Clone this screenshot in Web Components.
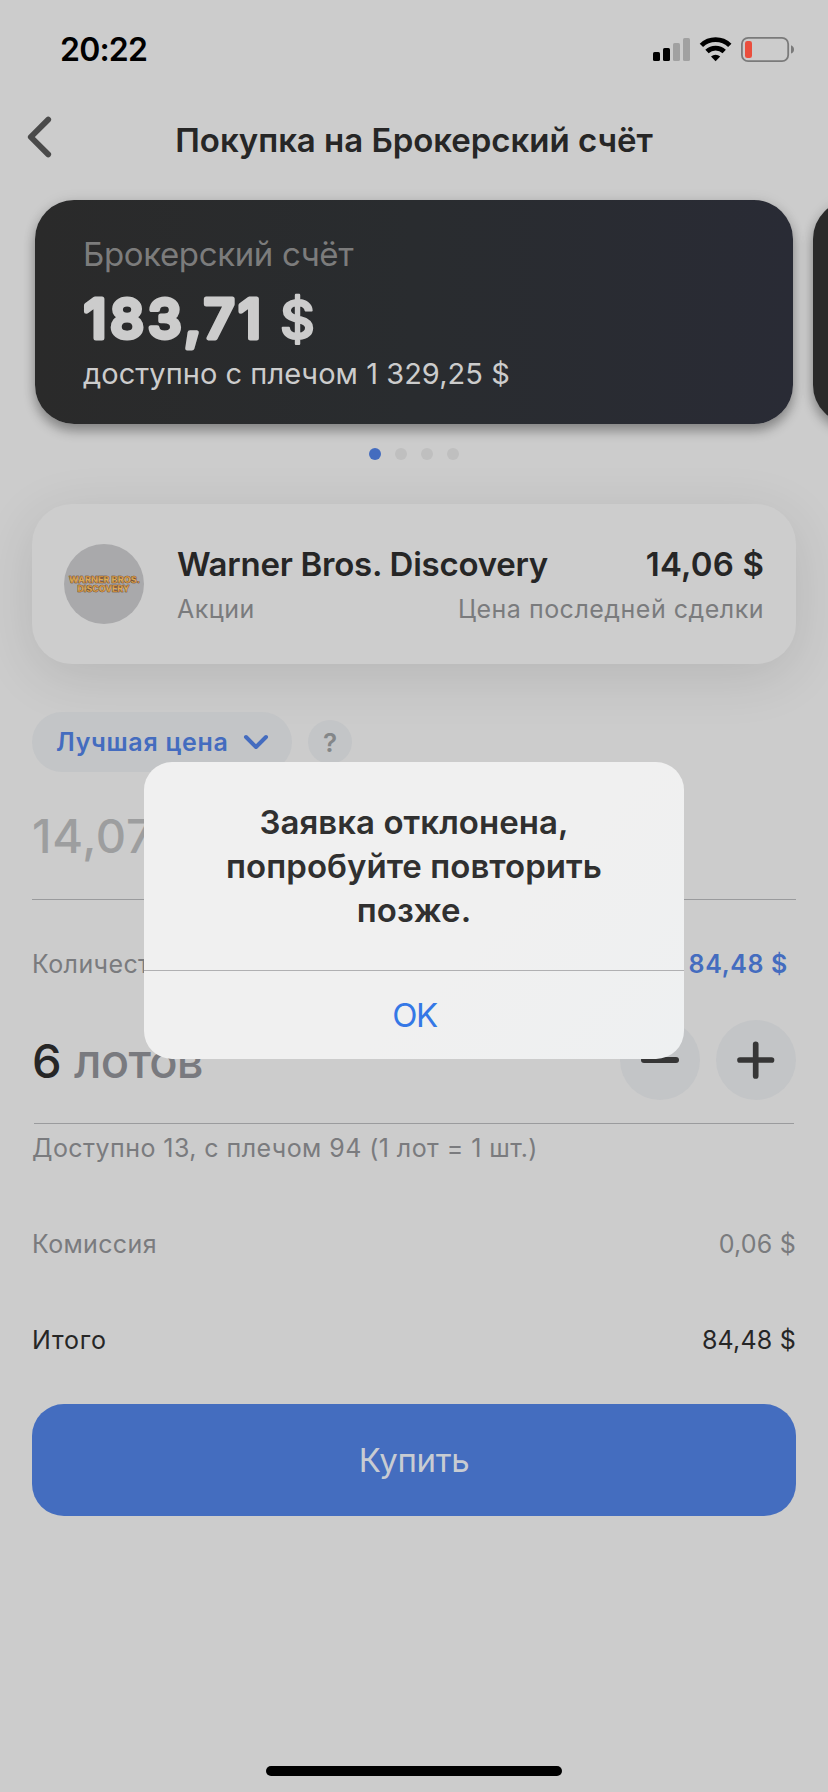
<!DOCTYPE html>
<html lang="ru">
<head>
<meta charset="utf-8">
<title>Покупка на Брокерский счёт</title>
<style>
html,body{margin:0;padding:0}
body{width:828px;height:1792px;overflow:hidden;background:#ccc;color:#262626;font-family:Inter,"Liberation Sans",sans-serif}
</style>
</head>
<body>
<order-screen></order-screen>
<script>
function define(name, html){
  const tpl = document.createElement('template');
  tpl.innerHTML = html;
  customElements.define(name, class extends HTMLElement{
    constructor(){
      super();
      this.attachShadow({mode:'open'}).appendChild(tpl.content.cloneNode(true));
    }
  });
}

define('status-bar', `
<style>
:host{display:flex;height:100px;box-sizing:border-box;padding:0 33px 0 60px;align-items:center;justify-content:space-between;color:#000}
.time{font-weight:600;font-size:32px;line-height:40px;letter-spacing:-.8px}
svg{display:block}
</style>
<div class="time">20:22</div>
<svg width="142" height="32" viewBox="653 34 142 32">
  <rect x="653" y="52" width="7" height="9" rx="1.6"/>
  <rect x="663" y="48" width="7" height="13" rx="1.6"/>
  <rect x="673" y="43" width="7" height="18" rx="1.6" fill="#a1a1a1"/>
  <rect x="683" y="38" width="7" height="23" rx="1.6" fill="#a1a1a1"/>
  <g fill="none" stroke="#000" stroke-width="4.8">
    <path d="M701.4 45.4A20.4 20.4 0 0 1 729.8 45.4"/>
    <path d="M707 51.5A12.4 12.4 0 0 1 724.2 51.5"/>
  </g>
  <path d="M711 56.6a6.6 6.6 0 0 1 9.2 0L715.6 61.2Z"/>
  <rect x="741.9" y="37.9" width="46.3" height="23.2" rx="6.2" fill="none" stroke="#7a7a7a" stroke-width="1.8"/>
  <rect x="745" y="41" width="7" height="17" rx="2.3" fill="#ea4e3d"/>
  <path d="M791 45.2q3 1.2 3 4.2t-3 4.2Z" fill="#7a7a7a"/>
</svg>`);

define('nav-header', `
<style>
:host{display:grid;grid-template-columns:80px 1fr 80px;height:80px;align-items:center}
svg{display:block;margin:-6px 0 0 24px}
h1{margin:0;text-align:center;font-weight:600;font-size:33px;line-height:40px;letter-spacing:-.04px;white-space:nowrap}
</style>
<svg width="32" height="48" viewBox="24 113 32 48"><path d="M48.2 119.6 30.8 137 48.2 154.4" fill="none" stroke="#4a4a4a" stroke-width="5.8" stroke-linecap="round" stroke-linejoin="round"/></svg>
<h1><slot></slot></h1>`);

define('account-card', `
<style>
:host{display:block;flex:none;box-sizing:border-box;width:758px;height:224px;border-radius:39px;padding:34px 48px;background:linear-gradient(90deg,#2a2a2a,#292c2f 50%,#292b35);box-shadow:0 7px 12px rgba(0,0,0,.32),0 0 14px rgba(0,0,0,.08);white-space:nowrap}
.name{font-size:33px;line-height:40px;letter-spacing:-.37px;color:#7c7c7c;height:40px}
svg{display:block;height:60px;margin-top:14px;overflow:visible}
.more{font-size:29px;line-height:36px;letter-spacing:.04px;color:#ccc;margin-top:7.6px}
</style>
<div class="name"><slot name="name"></slot></div>
<svg width="240" height="60" viewBox="0 0 240 60" font-family="Inter,sans-serif" font-weight="500" font-size="53.5" fill="#ccc" stroke="#ccc" stroke-linejoin="round"><text x="1" y="50" stroke-width="5" letter-spacing="4.1" id="sum"></text><text x="197" y="50.5" font-size="54" stroke-width="2.2" id="cur"></text></svg>
<div class="more"><slot name="more"></slot></div>`);

define('page-dots', `
<style>
:host{display:flex;justify-content:center;gap:14px;padding-top:24px}
i{width:12px;height:12px;border-radius:50%;background:#bfbfbf}
i:first-of-type{background:#446cbf}
</style><i></i><i></i><i></i><i></i>`);

define('stock-card', `
<style>
:host{display:flex;box-sizing:border-box;height:160px;margin:44px 32px 0;padding:40px 32px;border-radius:40px;background:#cdcdcd;box-shadow:0 12px 56px rgba(0,0,0,.11);white-space:nowrap}
.logo{flex:none;width:80px;height:80px;border-radius:50%;background:#a9a9ab}
.text{flex:1;margin-left:33px}
.row{display:flex;justify-content:space-between}
.top{font-weight:600;font-size:33px;line-height:40px}
.name{letter-spacing:-.25px}
.price{letter-spacing:.15px}
.sub{font-size:25px;line-height:32px;margin-top:9px;color:#7a7b7d;letter-spacing:.5px}
</style>
<svg class="logo" viewBox="0 0 80 80">
  <defs><linearGradient id="g" x1="0" x2="0" y1="0" y2="1"><stop offset="0" stop-color="#b8742e"/><stop offset=".5" stop-color="#dfb05a"/><stop offset="1" stop-color="#a9601f"/></linearGradient></defs>
  <g font-family="Inter,sans-serif" font-weight="800" font-size="9.6" fill="url(#g)" stroke="#5c3214" stroke-width=".7" paint-order="stroke">
    <text x="5" y="39.4" textLength="71" lengthAdjust="spacingAndGlyphs">WARNER BROS.</text>
    <text x="13.5" y="48.4" textLength="52" lengthAdjust="spacingAndGlyphs">DISCOVERY</text>
  </g>
</svg>
<div class="text">
  <div class="row top"><span class="name"><slot name="title"></slot></span><span class="price"><slot name="price"></slot></span></div>
  <div class="row sub"><span><slot name="kind"></slot></span><span><slot name="note"></slot></span></div>
</div>`);

define('price-type', `
<style>
:host{display:flex;align-items:center;gap:16px;margin:48px 32px 0;height:60px}
.pill{display:flex;align-items:center;box-sizing:border-box;width:260px;height:60px;border-radius:30px;padding-left:24px;background:#c3c5c7;color:#446cbf;font-weight:600;font-size:25px;line-height:30px;letter-spacing:.72px;white-space:nowrap}
.pill svg{margin-left:14px}
.help{width:44px;height:44px;border-radius:50%;background:#c3c5c7;color:#848789;font-weight:600;font-size:26px;line-height:45px;text-align:center}
</style>
<div class="pill"><slot></slot><svg width="26" height="18" viewBox="0 0 26 18"><path d="M3 4 13 14 23 4" fill="none" stroke="#446cbf" stroke-width="4" stroke-linecap="round" stroke-linejoin="round"/></svg></div>
<div class="help">?</div>`);

define('price-field', `
<style>
:host{display:block;box-sizing:border-box;height:128px;margin:0 32px;padding-top:34px;border-bottom:1px solid #9a9b9d;color:#9d9e9f;font-weight:500;font-size:47px;line-height:60px;letter-spacing:.7px}
</style><slot></slot>`);

define('quantity-field', `
<style>
:host{display:block;margin:0 32px}
.row{display:flex;justify-content:space-between;align-items:center}
.head{height:40px;padding:44px 8px 0 0;font-size:25px;line-height:40px;color:#7a7b7e;letter-spacing:.4px}
.head b{font-weight:600;color:#446cbf;letter-spacing:.63px}
.qty{height:80px;padding-top:36px;margin-bottom:23px}
.value{font-weight:500;font-size:47px;line-height:60px;white-space:nowrap;display:flex;padding-top:2px}
.value em{font-style:normal;color:#797a7f;font-size:47px;font-weight:500;letter-spacing:-.8px;margin-left:12.5px}
.btns{display:flex;gap:16px}
.btns svg{display:block;border-radius:50%;background:#c3c5c7}
.rule{height:1px;margin:0 2px;background:#9a9b9d}
.hint{font-size:25px;line-height:40px;padding-top:3.5px;color:#7a7b7e;letter-spacing:.44px;white-space:nowrap}
</style>
<div class="row head"><span>Количество</span><b><slot name="sum"></slot></b></div>
<div class="row qty">
  <div class="value"><slot name="value"></slot><em><slot name="unit"></slot></em></div>
  <div class="btns">
    <svg width="80" height="80" viewBox="0 0 80 80"><path d="M24 40H56" stroke="#363636" stroke-width="6" stroke-linecap="round"/></svg>
    <svg width="80" height="80" viewBox="0 0 80 80"><path d="M24 40H55.5M39.7 24.3V56" stroke="#363636" stroke-width="5.7" stroke-linecap="round"/></svg>
  </div>
</div>
<div class="rule"></div>
<div class="hint"><slot name="hint"></slot></div>`);

define('total-row', `
<style>
:host{display:flex;justify-content:space-between;margin:0 32px;height:40px;font-size:25px;line-height:40px;color:#7a7b7e}
:host([strong]){color:#262626}
.k{letter-spacing:.35px}
:host([strong]) .k{letter-spacing:.75px}
.v{letter-spacing:.2px}
</style><span class="k"><slot></slot></span><span class="v"><slot name="value"></slot></span>`);

define('buy-button', `
<style>
:host{display:flex;align-items:center;justify-content:center;height:112px;margin:44px 32px 0;border-radius:32px;background:#446dbf;color:#c8ccd2;font-size:33px;letter-spacing:-.34px}
</style><slot></slot>`);

define('alert-dialog', `
<style>
:host{display:block;position:absolute;left:144px;top:762px;width:540px;height:297px;border-radius:28px;overflow:hidden;background:linear-gradient(135deg,#f0f0f0 60%,#eef0f1)}
p{margin:0;height:209px;box-sizing:border-box;padding:38px 32px 0;border-bottom:1px solid #b0b0b2;text-align:center;font-weight:600;font-size:33px;line-height:44px;letter-spacing:.04px;color:#303030}
.ok{text-align:center;font-size:33px;line-height:88px;letter-spacing:-1.4px;text-indent:1px;color:#3578e6}
</style>
<p><slot></slot></p><div class="ok">OK</div>`);

define('home-indicator', `
<style>:host{display:block;position:absolute;left:266px;top:1766px;width:296px;height:10px;border-radius:5px;background:#000}</style>`);

customElements.define('account-carousel', class extends HTMLElement{
  constructor(){
    super();
    const root = this.attachShadow({mode:'open'});
    root.innerHTML = `
<style>
:host{display:flex;gap:20px;padding:20px 0 0 35px}
account-card:last-child{background:#2a2a2a}
</style>
<account-card><span slot="name">Брокерский счёт</span><span slot="more">доступно с плечом 1 329,25 $</span></account-card>
<account-card></account-card>`;
    const card = root.querySelector('account-card').shadowRoot;
    card.getElementById('sum').textContent = '183,71';
    card.getElementById('cur').textContent = '$';
  }
});

define('order-screen', `
<style>
:host{display:block;position:relative;width:828px;height:1792px;overflow:hidden;background:#ccc}
total-row{margin-top:56.5px}
total-row[strong]{margin-top:56px}
</style>
<status-bar></status-bar>
<nav-header>Покупка на Брокерский счёт</nav-header>
<account-carousel></account-carousel>
<page-dots></page-dots>
<stock-card><span slot="title">Warner Bros. Discovery</span><span slot="price">14,06 $</span><span slot="kind">Акции</span><span slot="note">Цена последней сделки</span></stock-card>
<price-type>Лучшая цена</price-type>
<price-field>14,07</price-field>
<quantity-field><span slot="sum">84,48 $</span><span slot="value">6</span><span slot="unit">лотов</span><span slot="hint">Доступно 13, с плечом 94 (1 лот = 1 шт.)</span></quantity-field>
<total-row>Комиссия<span slot="value">0,06 $</span></total-row>
<total-row strong>Итого<span slot="value">84,48 $</span></total-row>
<buy-button>Купить</buy-button>
<alert-dialog>Заявка отклонена, попробуйте повторить позже.</alert-dialog>
<home-indicator></home-indicator>`);
</script>
</body>
</html>
